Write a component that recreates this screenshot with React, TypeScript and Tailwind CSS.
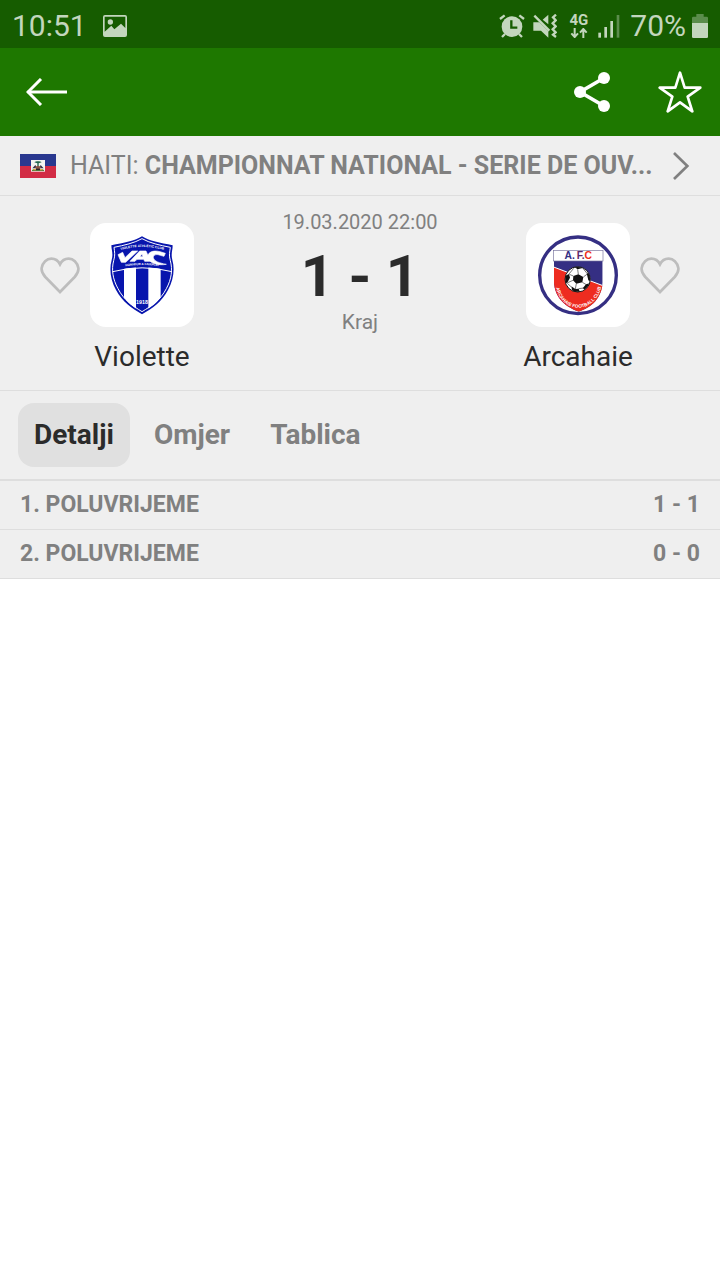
import { useState } from "react";
import type { ReactNode } from "react";

function PictureIcon() {
  return (
    <svg width="24" height="22" viewBox="0 0 72 66" aria-hidden="true">
      <path
        fillRule="evenodd"
        fill="currentColor"
        d="M6 0H66Q72 0 72 6V60Q72 66 66 66H6Q0 66 0 60V6Q0 0 6 0ZM5 5V50L25 32L34 43L54 26L67 39V5Z"
      />
      <circle cx="22" cy="21" r="8" fill="currentColor" />
    </svg>
  );
}

function AlarmIcon() {
  return (
    <svg width="26" height="24" viewBox="0 0 78 72" fill="none" stroke="currentColor" aria-hidden="true">
      <circle cx="39" cy="38" r="31" fill="currentColor" stroke="none" />
      <path d="M3 15L17 4M75 15L61 4" strokeWidth="7" />
      <path d="M18 60L9 69M60 60L69 69" strokeWidth="7" />
      <path d="M37 19V41H55" stroke="#165c00" strokeWidth="7" />
    </svg>
  );
}

function MuteVibrateIcon() {
  return (
    <svg width="24" height="24" viewBox="0 0 72 72" aria-hidden="true">
      <path d="M46 2V31L29 17Z" fill="currentColor" />
      <path d="M1 25H19L46 51V71L24 50H1Z" fill="currentColor" />
      <path d="M4 5L49 50" stroke="currentColor" strokeWidth="7" />
      <path
        d="M69 2L60 10L68 19L59 28L68 37L59 46L68 55L60 62L69 69"
        fill="none"
        stroke="currentColor"
        strokeWidth="7"
      />
    </svg>
  );
}

function DataArrowsIcon() {
  return (
    <svg width="18" height="10" viewBox="0 0 54 30" fill="none" stroke="currentColor" strokeWidth="6" aria-hidden="true">
      <path d="M14 0V26M4 16L14 27L24 16" />
      <path d="M40 30V4M30 14L40 3L50 14" />
    </svg>
  );
}

function SignalIcon() {
  return (
    <svg width="22" height="24" viewBox="0 0 66 72" fill="currentColor" aria-hidden="true">
      <rect x="1" y="56" width="8" height="15" />
      <rect x="19" y="39" width="8" height="32" />
      <rect x="37" y="21" width="8" height="50" />
      <rect x="56" y="3" width="8" height="68" opacity="0.4" />
    </svg>
  );
}

function BatteryIcon() {
  return (
    <svg width="16" height="24" viewBox="0 0 48 72" fill="currentColor" aria-hidden="true">
      <path d="M13 0H35V8H44Q48 8 48 12V27H0V12Q0 8 4 8H13Z" opacity="0.4" />
      <path d="M0 27H48V68Q48 72 44 72H4Q0 72 0 68Z" />
    </svg>
  );
}

function BackIcon() {
  return (
    <svg width="42" height="28" viewBox="0 0 126 84" fill="none" stroke="currentColor" strokeWidth="9" aria-hidden="true">
      <path d="M5 42H123" />
      <path d="M45 3L6 42L45 81" />
    </svg>
  );
}

function ShareIcon() {
  return (
    <svg width="36" height="40" viewBox="0 0 108 120" aria-hidden="true">
      <path d="M90 18L18 60L90 102" fill="none" stroke="currentColor" strokeWidth="11" />
      <g fill="currentColor">
        <circle cx="90" cy="18" r="18" />
        <circle cx="18" cy="60" r="18" />
        <circle cx="90" cy="102" r="18" />
      </g>
    </svg>
  );
}

function StarIcon() {
  return (
    <svg width="44" height="42" viewBox="0 0 132 126" aria-hidden="true">
      <path
        d="M66 5L80 50H127L89 77L103 121L66 94L29 121L43 77L5 50H52Z"
        fill="none"
        stroke="currentColor"
        strokeWidth="8"
        strokeLinejoin="round"
      />
    </svg>
  );
}

function HeartIcon() {
  return (
    <svg width="40" height="38" viewBox="0 0 120 114" aria-hidden="true">
      <path
        d="M60 108L16 63C6 52 4 43 5 36C8 19 20 8 34 8C46 8 54 13 60 25C66 13 74 8 86 8C100 8 112 19 115 36C116 43 114 52 104 63Z"
        fill="none"
        stroke="#bdbdbd"
        strokeWidth="8"
      />
    </svg>
  );
}

function HaitiFlag() {
  return (
    <svg className="shrink-0" width="36" height="24" viewBox="0 0 108 72" aria-hidden="true">
      <rect width="108" height="36" fill="#29388f" />
      <rect y="36" width="108" height="36" fill="#d22c45" />
      <rect x="33" y="18" width="42" height="35" fill="#f5f5f0" />
      <path d="M35 51C38 43 46 45 54 45C62 45 70 43 73 51Z" fill="#4d7a3c" />
      <path d="M43 25C48 21 60 21 65 25L56 28V38H52V28Z" fill="#22664c" />
      <path d="M37 43L46 33L52 43ZM71 43L62 33L56 43Z" fill="#30334e" />
      <path d="M44 39L54 35L64 39L59 45H49Z" fill="#8c5442" />
      <path d="M40 47H48M60 47H68" stroke="#dcae43" strokeWidth="4" />
      <path d="M48 46H60" stroke="#26262a" strokeWidth="4" />
    </svg>
  );
}

function VioletteCrest() {
  return (
    <svg className="size-full" viewBox="0 0 312 312" role="img" aria-label="Violette">
      <defs>
        <clipPath id="vac-body">
          <path d="M70 145Q156 121 244 145C238 194 211 243 156 267C105 243 74 194 70 145Z" />
        </clipPath>
        <path id="vac-top" d="M82 84Q156 60 232 84" />
        <path id="vac-bottom" d="M92 133Q156 119 222 133" />
      </defs>
      <path
        d="M156 40C136 53 101 60 64 67C65 84 70 91 65 111C57 139 62 173 78 201C97 237 127 256 156 274C187 256 215 237 234 201C250 173 255 139 247 111C242 91 248 84 248 67C211 60 176 53 156 40Z"
        fill="#0815ad"
      />
      <path
        d="M156 47C133 60 102 67 72 73C74 88 76 96 71 113C64 139 68 168 84 197C102 232 129 249 156 266C184 249 211 232 229 197C245 168 248 139 241 113C236 96 239 88 241 73C210 67 179 60 156 47Z"
        fill="none"
        stroke="#fff"
        strokeWidth="3"
      />
      <g clipPath="url(#vac-body)">
        <path d="M102 120H138V280H102ZM175 120H212V280H175Z" fill="#fff" />
      </g>
      <path d="M68 146Q156 123 246 146" fill="none" stroke="#fff" strokeWidth="3" />
      <g fill="#fff" className="font-['Liberation_Sans']" fontWeight="700">
        <text fontSize="10">
          <textPath href="#vac-top" startOffset="50%" textAnchor="middle">
            VIOLETTE ATHLETIC CLUB
          </textPath>
        </text>
        <text fontSize="9">
          <textPath href="#vac-bottom" startOffset="50%" textAnchor="middle">
            HONNEUR &amp; FAIRPLAY
          </textPath>
        </text>
        <text x="156" y="243" fontSize="16" textAnchor="middle">
          1918
        </text>
      </g>
      <g fill="#fff" stroke="#fff" strokeWidth="2">
        <path d="M84 95L98 88L105 104L126 84H143L107 118H94Z" />
        <path fillRule="evenodd" d="M120 115L149 84H168L182 115H164L161 109H141L135 115ZM150 101H159L156 93Z" />
        <path d="M222 100L211 97C199 92 189 96 190 104C192 115 208 120 229 124C205 128 180 122 174 105C170 89 188 80 210 86L226 91Z" />
      </g>
    </svg>
  );
}

function ArcahaieCrest() {
  return (
    <svg className="size-full" viewBox="0 0 312 312" role="img" aria-label="Arcahaie">
      <defs>
        <clipPath id="afc-shield">
          <path d="M84 114H230V178C227 226 196 254 158 266C119 253 86 224 84 178Z" />
        </clipPath>
        <clipPath id="afc-ball">
          <circle cx="155" cy="169" r="37" />
        </clipPath>
        <path id="afc-motto" d="M89 186C102 277 212 277 227 184" />
      </defs>
      <circle cx="156" cy="157" r="115" fill="#fff" stroke="#352f83" strokeWidth="10" />
      <g clipPath="url(#afc-shield)">
        <rect x="80" y="110" width="156" height="160" fill="#352f83" />
        <path d="M80 131L236 190V280H80Z" fill="#ee2c20" />
        <path d="M80 131L236 190" stroke="#fff" strokeWidth="3" />
      </g>
      <rect x="82" y="82" width="149" height="32" fill="#fff" stroke="#77739d" strokeWidth="2" />
      <g fontSize="31" fontWeight="700" textAnchor="middle" className="font-['Liberation_Sans']">
        <text x="131" y="109" fill="#352f83">
          A.
        </text>
        <text x="164" y="109" fill="#5f2a6c">
          F.
        </text>
        <text x="187" y="109" fill="#ee2c20">
          C
        </text>
      </g>
      <circle cx="155" cy="169" r="38" fill="#fff" stroke="#171717" strokeWidth="3" />
      <g clipPath="url(#afc-ball)">
        <path
          d="M142 159L157 154L172 162L169 178L151 182L141 172ZM143 131L155 139L170 135L166 126H145ZM118 158L129 153L132 164L123 181L115 176ZM182 151L194 151L195 176L187 172ZM136 190L148 198L158 197L162 208L140 210ZM180 184L191 181L180 201L170 196Z"
          fill="#111"
        />
        <path
          d="M157 154L155 139M172 162L184 153M169 178L181 185M151 182L148 198M141 172L125 179M142 159L130 154M129 153L143 136M170 135L183 151M158 197L173 195M124 181L136 192"
          stroke="#333"
          strokeWidth="2"
        />
      </g>
      <text fontSize="14" fontWeight="700" fill="#fff" className="font-['Liberation_Sans']">
        <textPath href="#afc-motto" startOffset="50%" textAnchor="middle">
          ARCAHAIE FOOTBALL CLUB
        </textPath>
      </text>
    </svg>
  );
}

function FavouriteButton({ team }: { team: string }) {
  return (
    <button type="button" aria-label={`Favorit ${team}`} className="flex h-[104px] items-center">
      <HeartIcon />
    </button>
  );
}

function Team({ name, children }: { name: string; children: ReactNode }) {
  return (
    <div className="flex w-[104px] flex-col items-center">
      <div className="size-[104px] rounded-2xl bg-white">{children}</div>
      <span className="mt-3 text-[28px] leading-9 whitespace-nowrap text-[#2b2b2b]">{name}</span>
    </div>
  );
}

const tabs = ["Detalji", "Omjer", "Tablica"];
const halves = [
  { label: "1. POLUVRIJEME", score: "1 - 1" },
  { label: "2. POLUVRIJEME", score: "0 - 0" },
];

export default function App() {
  const [active, setActive] = useState("Detalji");

  return (
    <div className="min-h-screen bg-white font-[Roboto,sans-serif]">
      <div className="flex h-12 items-center justify-between bg-[#165c00] pt-1 pr-3 pl-3 text-[#c3d6bd]">
        <div className="flex items-center gap-4">
          <span className="text-[30px] leading-10">10:51</span>
          <PictureIcon />
        </div>
        <div className="flex items-center gap-[10px]">
          <div className="flex items-center gap-2 pr-[2px]">
            <AlarmIcon />
            <MuteVibrateIcon />
          </div>
          <div className="flex flex-col items-center gap-[2px]">
            <span className="text-[15px] leading-3 font-bold">4G</span>
            <DataArrowsIcon />
          </div>
          <SignalIcon />
          <div className="flex items-center gap-[6px]">
            <span className="text-[30px] leading-10">70%</span>
            <BatteryIcon />
          </div>
        </div>
      </div>

      <header className="flex h-22 items-center justify-between bg-[#1e7800] pr-[18px] pl-[26px] text-white">
        <button type="button" aria-label="Natrag">
          <BackIcon />
        </button>
        <div className="flex items-center gap-12">
          <button type="button" aria-label="Podijeli">
            <ShareIcon />
          </button>
          <button type="button" aria-label="Favorit">
            <StarIcon />
          </button>
        </div>
      </header>

      <main className="bg-[#efefef]">
        <a href="#liga" className="flex h-15 items-center border-b border-[#dedede] pr-[30px] pl-5 text-[#808080]">
          <HaitiFlag />
          <span className="ml-[14px] flex-1 text-[25px] leading-8 whitespace-nowrap">
            HAITI: <b className="font-bold">CHAMPIONNAT NATIONAL - SERIE DE OUV...</b>
          </span>
          <svg width="18" height="28" viewBox="0 0 54 84" aria-hidden="true">
            <path d="M6 3L46 42L6 81" fill="none" stroke="currentColor" strokeWidth="8" />
          </svg>
        </a>

        <section className="flex h-[195px] items-start justify-between border-b border-[#dedede] px-10">
          <div className="flex gap-[10px] pt-[27px]">
            <FavouriteButton team="Violette" />
            <Team name="Violette">
              <VioletteCrest />
            </Team>
          </div>
          <div className="flex flex-col items-center pt-[10px] text-[#808080]">
            <span className="text-[20px] leading-8">19.03.2020 22:00</span>
            <span className="pt-1 text-[58px] leading-17 font-bold whitespace-nowrap text-[#2b2b2b]">1 - 1</span>
            <span className="text-[21px] leading-6">Kraj</span>
          </div>
          <div className="flex gap-[10px] pt-[27px]">
            <Team name="Arcahaie">
              <ArcahaieCrest />
            </Team>
            <FavouriteButton team="Arcahaie" />
          </div>
        </section>

        <div role="tablist" className="flex h-[90px] items-center gap-2 border-b-2 border-[#dedede] px-[18px]">
          {tabs.map((tab) => (
            <button
              key={tab}
              type="button"
              role="tab"
              aria-selected={active === tab}
              onClick={() => setActive(tab)}
              className={
                active === tab
                  ? "h-16 rounded-2xl bg-[#e0e0e0] px-4 text-[28px] font-bold text-[#2b2b2b]"
                  : "h-16 rounded-2xl px-4 text-[28px] font-bold text-[#808080]"
              }
            >
              {tab}
            </button>
          ))}
        </div>

        <dl className="text-[23px] leading-8 font-bold text-[#808080]">
          {halves.map((half) => (
            <div key={half.label} className="flex h-[49px] items-center justify-between border-b border-[#dedede] px-5">
              <dt>{half.label}</dt>
              <dd>{half.score}</dd>
            </div>
          ))}
        </dl>
      </main>
    </div>
  );
}
